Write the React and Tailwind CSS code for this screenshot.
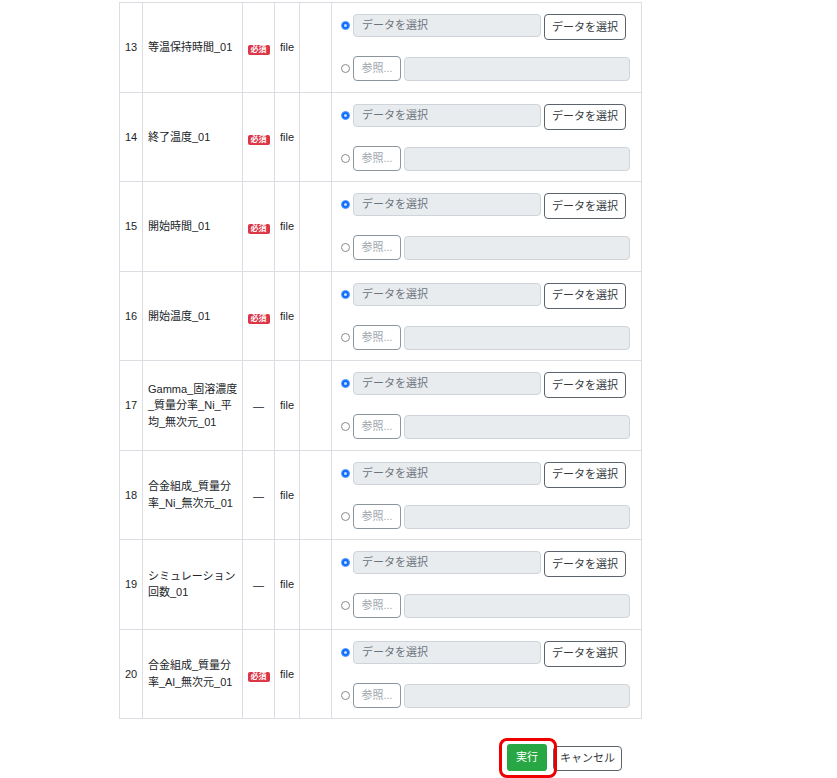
import React from 'react';

const rows = [
  { no: 13, name: '等温保持時間_01', required: true },
  { no: 14, name: '終了温度_01', required: true },
  { no: 15, name: '開始時間_01', required: true },
  { no: 16, name: '開始温度_01', required: true },
  { no: 17, name: 'Gamma_固溶濃度_質量分率_Ni_平均_無次元_01', required: false },
  { no: 18, name: '合金組成_質量分率_Ni_無次元_01', required: false },
  { no: 19, name: 'シミュレーション回数_01', required: false },
  { no: 20, name: '合金組成_質量分率_Al_無次元_01', required: true },
];

function Radio({ checked }) {
  if (checked) {
    return (
      <span className="w-[9px] h-[9px] rounded-full bg-[#0d6efd] border border-[#5b9bff] flex items-center justify-center">
        <span className="w-[3px] h-[3px] rounded-full bg-[#cfe0ff]" />
      </span>
    );
  }
  return <span className="w-[9px] h-[9px] rounded-full bg-white border border-[#8a8a8a]" />;
}

function SourceCell() {
  return (
    <div className="h-[88.5px] pl-[9px] pt-[11px] flex flex-col">
      {/* Data select line */}
      <div className="flex items-start">
        <div className="h-[23px] flex items-center">
          <Radio checked />
        </div>
        <div className="ml-[3px] w-[188px] h-[23px] bg-[#e9ecef] border border-[#ced4da] rounded-[4px] pl-[8px] flex items-center text-[11px] text-[#6c757d]">
          データを選択
        </div>
        <button className="ml-[3px] w-[82px] h-[26px] border border-[#5c636a] rounded-[4px] bg-white text-[11px] text-[#343a40] flex items-center justify-center">
          データを選択
        </button>
      </div>

      {/* File browse line */}
      <div className="flex items-end mt-[16px]">
        <div className="h-[25px] flex items-center">
          <Radio />
        </div>
        <button className="ml-[3px] w-[48px] h-[25px] border border-[#8d959c] rounded-[4px] bg-white text-[11px] text-[#a0a7ae] flex items-center justify-center">
          参照...
        </button>
        <div className="ml-[3px] w-[226px] h-[24px] bg-[#e9ecef] border border-[#ced4da] rounded-[4px]" />
      </div>
    </div>
  );
}

export default function App() {
  return (
    <div
      className="w-[837px] h-[778px] overflow-hidden bg-white text-[#212529]"
      style={{ fontFamily: '"Liberation Sans", "Noto Sans CJK JP", sans-serif' }}
    >
      {/* Parameter table */}
      <div className="pt-[2px] pl-[119px]">
        <table className="table-fixed border-collapse w-[522px]">
          <colgroup>
            <col className="w-[23px]" />
            <col className="w-[100px]" />
            <col className="w-[32px]" />
            <col className="w-[25px]" />
            <col className="w-[32px]" />
            <col className="w-[310px]" />
          </colgroup>
          <tbody>
            {rows.map((r) => (
              <tr key={r.no}>
                <td className="border border-[#dadde1] text-[11px] text-center align-middle p-0">{r.no}</td>
                <td className="border border-[#dadde1] text-[11px] leading-[16.5px] align-middle pl-[5px] pr-[1px] py-0">
                  {r.name}
                </td>
                <td className="border border-[#dadde1] text-center align-middle p-0">
                  {r.required ? (
                    <span className="inline-block bg-[#dc3545] text-white text-[8px] font-bold leading-[10px] px-[3px] rounded-[2px]">
                      必須
                    </span>
                  ) : (
                    <span className="text-[11px]">—</span>
                  )}
                </td>
                <td className="border border-[#dadde1] text-[11px] text-center align-middle p-0">file</td>
                <td className="border border-[#dadde1] p-0" />
                <td className="border border-[#dadde1] p-0 align-top">
                  <SourceCell />
                </td>
              </tr>
            ))}
          </tbody>
        </table>
      </div>

      {/* Action buttons */}
      <div className="flex items-start pl-[507px] mt-[25px]">
        <div className="relative">
          <button className="w-[40px] h-[27px] bg-[#28a745] text-white text-[11px] rounded-[3px] flex items-center justify-center">
            実行
          </button>
          <span className="absolute -left-[8px] -top-[6px] -right-[10px] -bottom-[7px] border-[3px] border-[#ee0000] rounded-[8px] pointer-events-none" />
        </div>
        <button className="ml-[6px] mt-[2px] w-[69px] h-[25px] border border-[#5c636a] rounded-[4px] bg-white text-[11px] text-[#343a40] flex items-center justify-center">
          キャンセル
        </button>
      </div>
    </div>
  );
}
